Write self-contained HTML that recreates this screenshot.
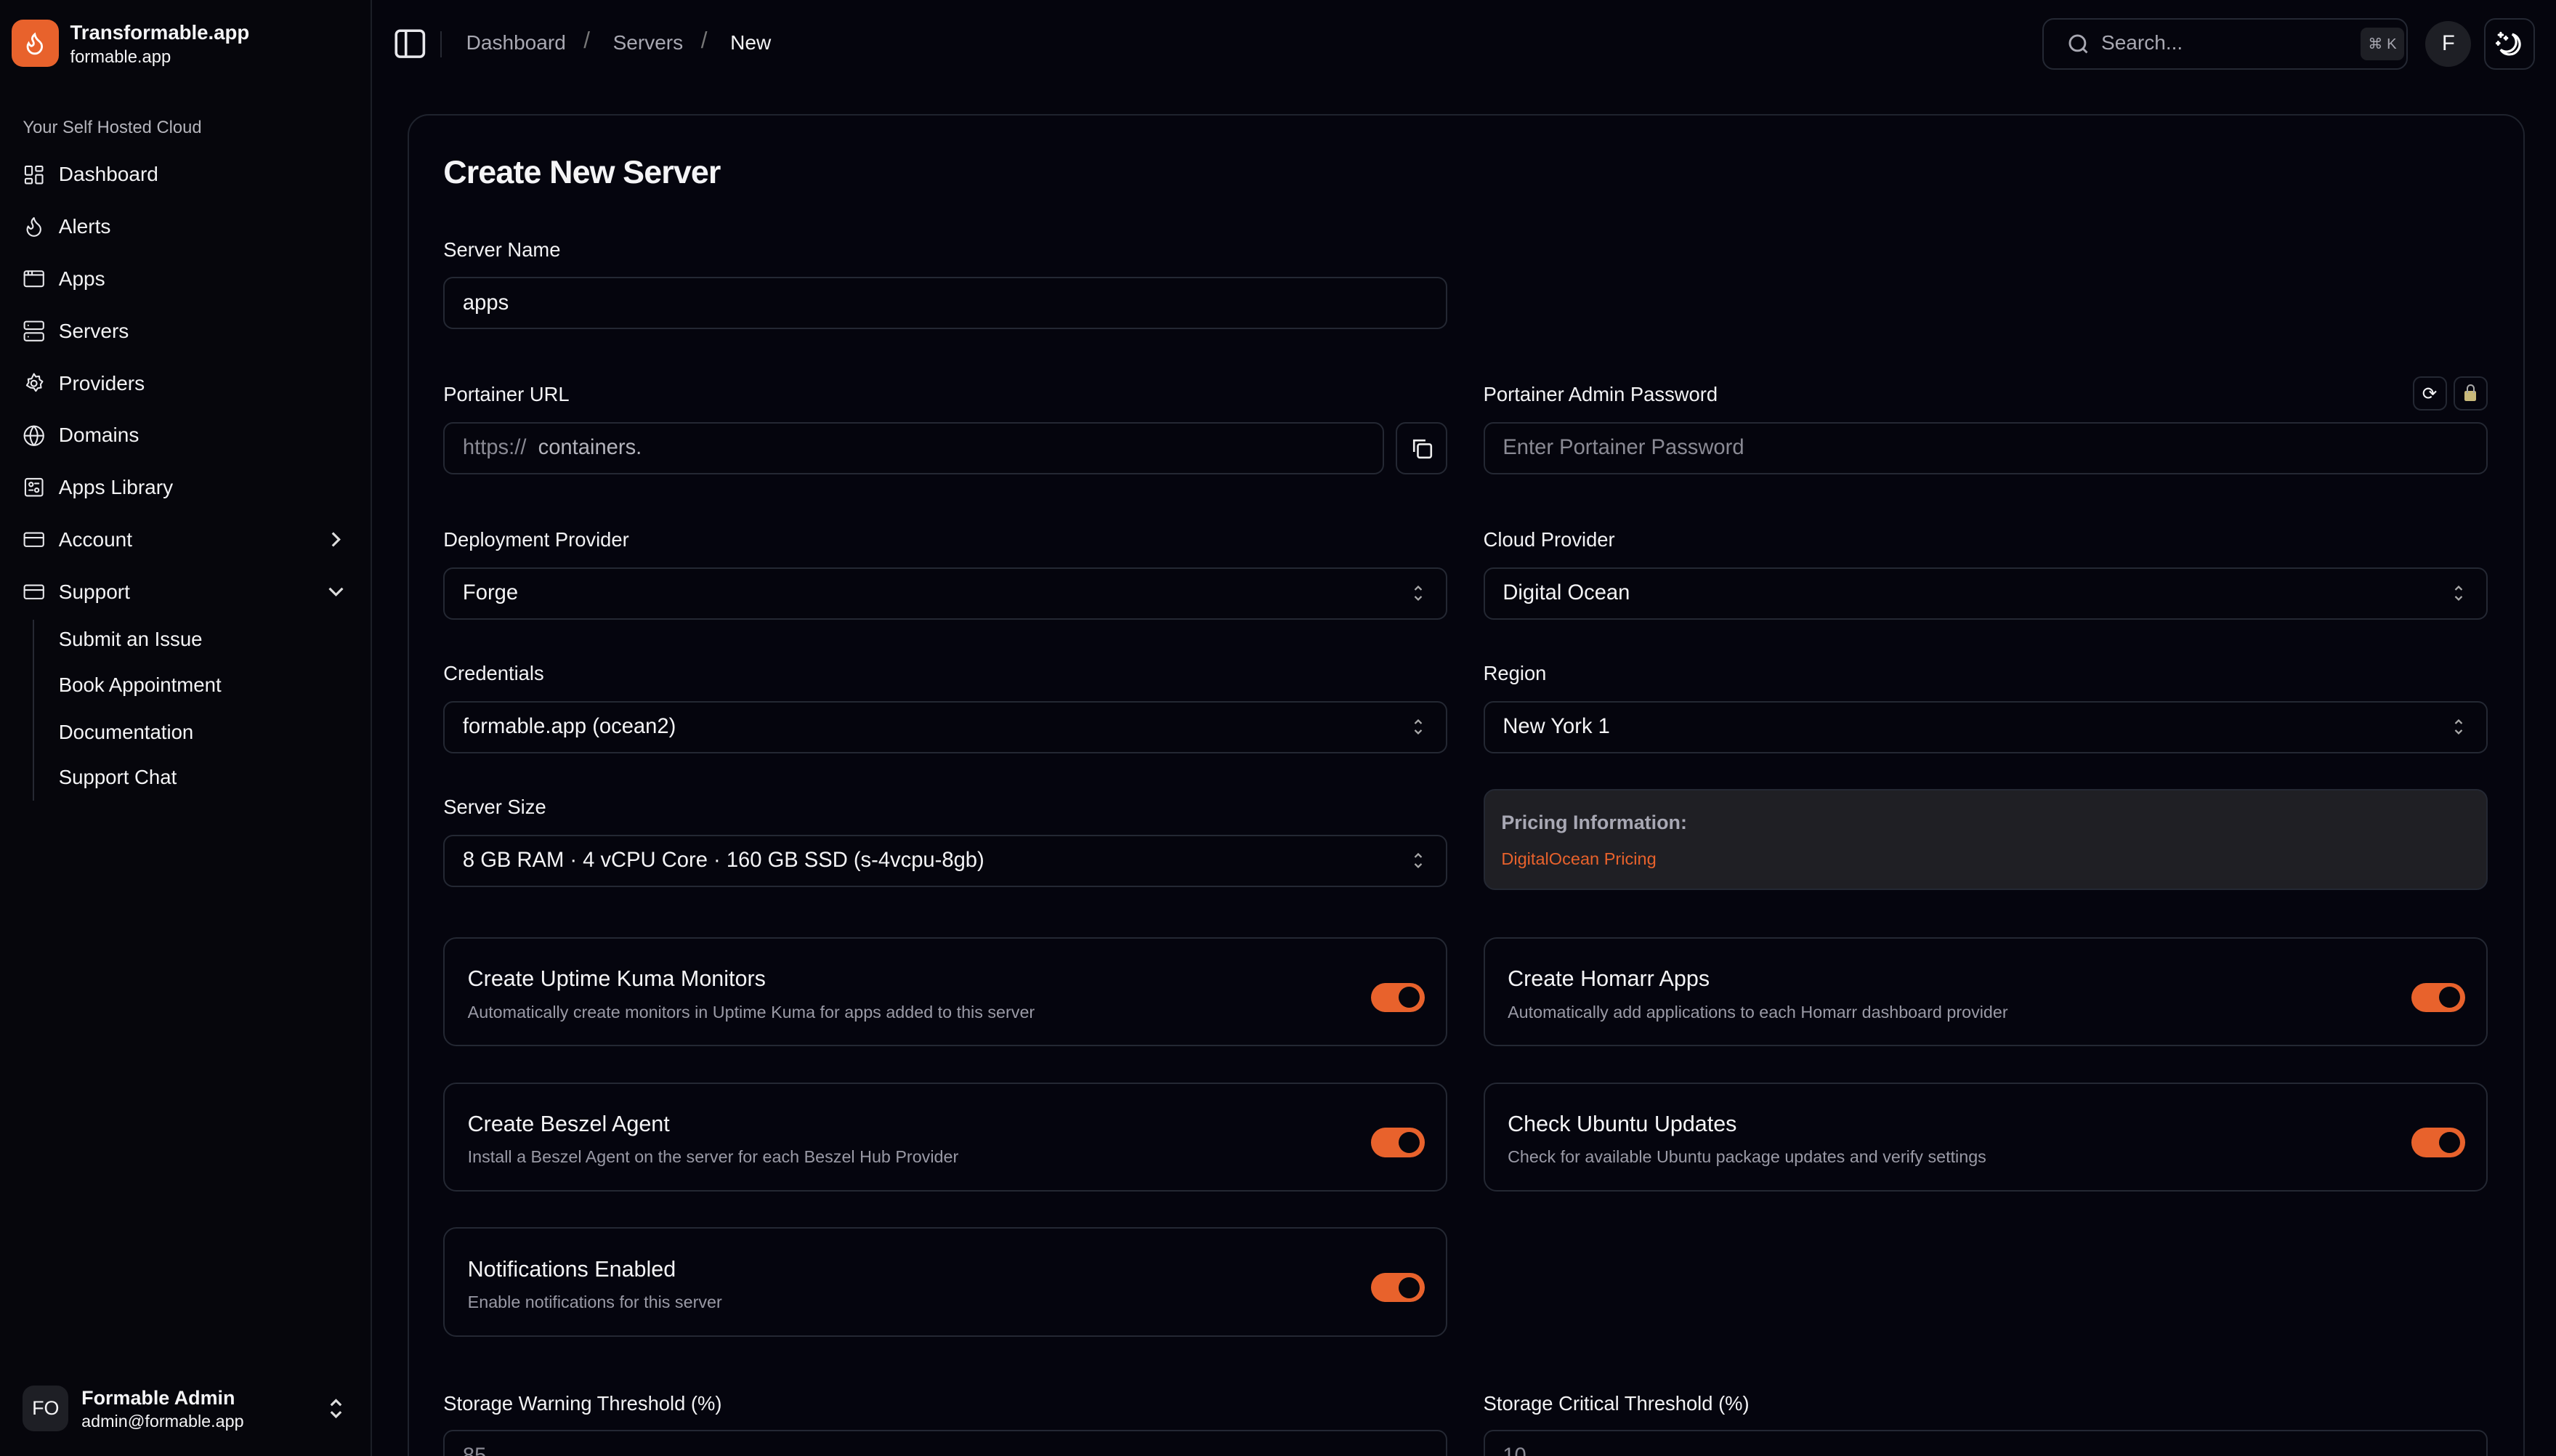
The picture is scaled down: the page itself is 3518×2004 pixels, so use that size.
<!DOCTYPE html>
<html><head><meta charset="utf-8"><style>
*{box-sizing:border-box;margin:0;padding:0}
html,body{width:3518px;height:2004px;overflow:hidden;background:#05050d}
#root{zoom:2.2436;width:1568px;height:893px;position:relative;font-family:"Liberation Sans",sans-serif;color:#f4f4f6;overflow:hidden;background:#05050d}
.a{position:absolute;white-space:nowrap}
.side{position:absolute;left:0;top:0;width:228px;height:893px;background:#06060c;border-right:1px solid #1c1f27}
.nav{position:absolute;left:14px;font-size:12.5px;display:flex;align-items:center;gap:8px;color:#f2f2f4}
.nav svg{width:14px;height:14px;stroke:#e8e8ec;fill:none;stroke-width:1.6;stroke-linecap:round;stroke-linejoin:round}
.sub{position:absolute;left:36px;font-size:12.3px}
.lbl{position:absolute;font-size:12.2px;color:#f2f2f4}
.inp{position:absolute;height:32px;border:1px solid #242833;border-radius:6px;background:#05050d;font-size:13px;padding-left:11px;display:flex;align-items:center}
.chev{position:absolute;right:13px;top:9px;width:8px;height:12px}
.tc{position:absolute;height:67px;border:1px solid #242833;border-radius:8px}
.tc .t{position:absolute;left:14px;top:17px;font-size:13.6px}
.tc .d{position:absolute;left:14px;top:39px;font-size:10.4px;color:#9a9aa6}
.tg{position:absolute;right:13px;top:27px;width:33px;height:18px;border-radius:9px;background:#e8622c}
.tg::after{content:"";position:absolute;right:3px;top:2.5px;width:13px;height:13px;border-radius:50%;background:#06060c}
</style></head><body><div id="root">
<div class="side">
 <div class="a" style="left:7px;top:12px;width:29px;height:29px;border-radius:7px;background:#e8622c"></div>
 <svg class="a" style="left:14px;top:19px" width="15" height="15" viewBox="0 0 24 24" fill="none" stroke="#fff" stroke-width="2" stroke-linecap="round"><path d="M8.5 14.5A2.5 2.5 0 0 0 11 12c0-1.4-.5-2-1-3-1.1-2.1-.2-4 2-6 .5 2.5 2 4.9 4 6.5 2 1.6 3 3.5 3 5.5a7 7 0 1 1-14 0c0-1.200.4-2.300 1-3.200.4 1 1.200 1.900 2.500 2.700z"/></svg>
 <div class="a" style="left:43px;top:13px;font-size:12.3px;font-weight:bold">Transformable.app</div>
 <div class="a" style="left:43px;top:29px;font-size:10.6px">formable.app</div>
 <div class="a" style="left:14px;top:72px;font-size:10.6px;color:#b4b4bc">Your Self Hosted Cloud</div>
 <div class="nav" style="top:100px"><svg viewBox="0 0 24 24"><rect x="3" y="3" width="7" height="9" rx="1"/><rect x="14" y="3" width="7" height="5" rx="1"/><rect x="14" y="12" width="7" height="9" rx="1"/><rect x="3" y="16" width="7" height="5" rx="1"/></svg>Dashboard</div>
 <div class="nav" style="top:132px"><svg viewBox="0 0 24 24"><path d="M8.5 14.5A2.5 2.5 0 0 0 11 12c0-1.4-.5-2-1-3-1.1-2.1-.2-4 2-6 .5 2.5 2 4.9 4 6.5 2 1.6 3 3.5 3 5.5a7 7 0 1 1-14 0c0-1.2.4-2.3 1-3.2.4 1 1.2 1.9 2.5 2.7z"/></svg>Alerts</div>
 <div class="nav" style="top:164px"><svg viewBox="0 0 24 24"><rect x="2" y="4" width="20" height="16" rx="2"/><path d="M2 8h20M6 4v4M10 4v4"/></svg>Apps</div>
 <div class="nav" style="top:196px"><svg viewBox="0 0 24 24"><rect x="2" y="2" width="20" height="8" rx="2"/><rect x="2" y="14" width="20" height="8" rx="2"/><path d="M6 6h.01M6 18h.01"/></svg>Servers</div>
 <div class="nav" style="top:228px"><svg viewBox="0 0 24 24"><circle cx="12" cy="12" r="3"/><path d="M12 2l2 3 3.5-.5.5 3.5 3 2-2 3 .5 3.5-3.5.5-2 3-2-3-3.5-.5L7.5 16 4.5 14l2-3-.5-3.5L9.5 7z"/></svg>Providers</div>
 <div class="nav" style="top:260px"><svg viewBox="0 0 24 24"><circle cx="12" cy="12" r="10"/><path d="M2 12h20M12 2a15 15 0 0 1 0 20M12 2a15 15 0 0 0 0 20"/></svg>Domains</div>
 <div class="nav" style="top:292px"><svg viewBox="0 0 24 24"><rect x="3" y="3" width="18" height="18" rx="2"/><circle cx="9" cy="9" r="2"/><circle cx="15" cy="15" r="2"/><path d="M7 15h4M13 8h4"/></svg>Apps Library</div>
 <div class="nav" style="top:324px"><svg viewBox="0 0 24 24"><rect x="2" y="5" width="20" height="14" rx="2"/><path d="M2 10h20"/></svg>Account</div>
 <svg class="a" style="left:201px;top:325px" width="10" height="12" viewBox="0 0 10 12" fill="none" stroke="#ddd" stroke-width="1.4"><path d="M3 2l4 4-4 4"/></svg>
 <div class="nav" style="top:356px"><svg viewBox="0 0 24 24"><rect x="2" y="5" width="20" height="14" rx="2"/><path d="M2 10h20"/></svg>Support</div>
 <svg class="a" style="left:200px;top:358px" width="12" height="10" viewBox="0 0 12 10" fill="none" stroke="#ddd" stroke-width="1.4"><path d="M2 3l4 4 4-4"/></svg>
 <div class="a" style="left:20px;top:380px;width:1px;height:111px;background:#262932"></div>
 <div class="sub" style="top:385px">Submit an Issue</div>
 <div class="sub" style="top:413px">Book Appointment</div>
 <div class="sub" style="top:442px">Documentation</div>
 <div class="sub" style="top:470px">Support Chat</div>
 <div class="a" style="left:14px;top:850px;width:28px;height:28px;border-radius:7px;background:#1e1f25;font-size:12px;display:flex;align-items:center;justify-content:center">FO</div>
 <div class="a" style="left:50px;top:851px;font-size:12px;font-weight:bold">Formable Admin</div>
 <div class="a" style="left:50px;top:866px;font-size:10.4px">admin@formable.app</div>
 <svg class="a" style="left:200px;top:857px" width="12" height="14" viewBox="0 0 12 14" fill="none" stroke="#ddd" stroke-width="1.4"><path d="M3 5l3-3 3 3M3 9l3 3 3-3"/></svg>
</div>
<svg class="a" style="left:242px;top:18px" width="19" height="18" viewBox="0 0 19 18" fill="none" stroke="#e8e8ec" stroke-width="1.6"><rect x="1" y="1" width="17" height="16" rx="2.5"/><path d="M7 1v16"/></svg>
<div class="a" style="left:270px;top:19px;width:1px;height:16px;background:#262932"></div>
<div class="a" style="left:286px;top:19px;font-size:12.5px;color:#a8a8b2">Dashboard</div>
<div class="a" style="left:430px;top:17px;font-size:14px;color:#777">/</div>
<div class="a" style="left:358px;top:17px;font-size:14px;color:#777">/</div>
<div class="a" style="left:376px;top:19px;font-size:12.5px;color:#a8a8b2">Servers</div>
<div class="a" style="left:448px;top:19px;font-size:12.5px">New</div>
<div class="a" style="left:1253px;top:11px;width:224px;height:32px;border:1px solid #242833;border-radius:7px"></div>
<svg class="a" style="left:1268px;top:20px" width="14" height="14" viewBox="0 0 24 24" fill="none" stroke="#a8a8b2" stroke-width="2.2"><circle cx="11" cy="11" r="8"/><path d="M21 21l-4.3-4.3"/></svg>
<div class="a" style="left:1289px;top:19px;font-size:12.5px;color:#a8a8b2">Search...</div>
<div class="a" style="left:1448px;top:17px;width:27px;height:20px;border-radius:4px;background:#1e1f25;font-size:9px;color:#a8a8b2;display:flex;align-items:center;justify-content:center">⌘ K</div>
<div class="a" style="left:1488px;top:13px;width:28px;height:28px;border-radius:50%;background:#1e1f25;font-size:13px;display:flex;align-items:center;justify-content:center">F</div>
<div class="a" style="left:1524px;top:11px;width:31px;height:32px;border:1px solid #242833;border-radius:7px"></div>
<svg class="a" style="left:1530px;top:18px" width="19" height="19" viewBox="0 0 24 24" fill="none" stroke="#fff" stroke-width="1.8" stroke-linecap="round"><path d="M14 4a8 8 0 1 1-9 12 7 7 0 0 0 9-12z"/><path d="M5 3v3M3.5 4.5h3M9 6v2M8 7h2M3 10v2M2 11h2"/></svg>
<div class="a" style="left:250px;top:70px;width:1299px;height:840px;border:1px solid #1f232d;border-radius:13px;background:#05050e"></div>
<div class="a" style="left:272px;top:94px;font-size:20px;font-weight:bold;letter-spacing:-0.4px">Create New Server</div>
<div class="lbl" style="left:272px;top:146px">Server Name</div>
<div class="inp" style="left:272px;top:170px;width:616px">apps</div>
<div class="lbl" style="left:272px;top:235px">Portainer URL</div>
<div class="inp" style="left:272px;top:259px;width:577px"><span style="color:#8a8a94">https://</span>&nbsp;&nbsp;<span style="color:#b4b4bc">containers.</span></div>
<div class="a" style="left:856px;top:259px;width:32px;height:32px;border:1px solid #242833;border-radius:6px"></div>
<svg class="a" style="left:865px;top:268px" width="14" height="14" viewBox="0 0 24 24" fill="none" stroke="#eee" stroke-width="2"><rect x="8" y="8" width="14" height="14" rx="2"/><path d="M4 16V4h12"/></svg>
<div class="lbl" style="left:910px;top:235px">Portainer Admin Password</div>
<div class="a" style="left:1480px;top:231px;width:21px;height:21px;border:1px solid #242833;border-radius:5px;font-size:11px;display:flex;align-items:center;justify-content:center">⟳</div>
<div class="a" style="left:1505px;top:231px;width:21px;height:21px;border:1px solid #242833;border-radius:5px;display:flex;align-items:center;justify-content:center"><div style="width:7px;height:6px;background:#c9b97a;border-radius:1px;margin-top:3px;position:relative"><div style="position:absolute;left:1px;top:-4px;width:5px;height:5px;border:1px solid #aaa;border-bottom:none;border-radius:3px 3px 0 0"></div></div></div>
<div class="inp" style="left:910px;top:259px;width:616px;color:#8a8a94">Enter Portainer Password</div>
<div class="lbl" style="left:272px;top:324px">Deployment Provider</div>
<div class="inp" style="left:272px;top:348px;width:616px">Forge<svg class="chev" viewBox="0 0 8 12" fill="none" stroke="#aaa" stroke-width="1"><path d="M2 4l2-2 2 2M2 8l2 2 2-2"/></svg></div>
<div class="lbl" style="left:910px;top:324px">Cloud Provider</div>
<div class="inp" style="left:910px;top:348px;width:616px">Digital Ocean<svg class="chev" viewBox="0 0 8 12" fill="none" stroke="#aaa" stroke-width="1"><path d="M2 4l2-2 2 2M2 8l2 2 2-2"/></svg></div>
<div class="lbl" style="left:272px;top:406px">Credentials</div>
<div class="inp" style="left:272px;top:430px;width:616px">formable.app (ocean2)<svg class="chev" viewBox="0 0 8 12" fill="none" stroke="#aaa" stroke-width="1"><path d="M2 4l2-2 2 2M2 8l2 2 2-2"/></svg></div>
<div class="lbl" style="left:910px;top:406px">Region</div>
<div class="inp" style="left:910px;top:430px;width:616px">New York 1<svg class="chev" viewBox="0 0 8 12" fill="none" stroke="#aaa" stroke-width="1"><path d="M2 4l2-2 2 2M2 8l2 2 2-2"/></svg></div>
<div class="lbl" style="left:272px;top:488px">Server Size</div>
<div class="inp" style="left:272px;top:512px;width:616px">8 GB RAM · 4 vCPU Core · 160 GB SSD (s-4vcpu-8gb)<svg class="chev" viewBox="0 0 8 12" fill="none" stroke="#aaa" stroke-width="1"><path d="M2 4l2-2 2 2M2 8l2 2 2-2"/></svg></div>
<div class="a" style="left:910px;top:484px;width:616px;height:62px;border:1px solid #242833;border-radius:7px;background:#1f1f24"></div>
<div class="a" style="left:921px;top:498px;font-size:12px;font-weight:bold;color:#a8a8b4">Pricing Information:</div>
<div class="a" style="left:921px;top:521px;font-size:10.5px;color:#e8622c">DigitalOcean Pricing</div>
<div class="tc" style="left:272px;top:575px;width:616px"><div class="t">Create Uptime Kuma Monitors</div><div class="d">Automatically create monitors in Uptime Kuma for apps added to this server</div><div class="tg"></div></div>
<div class="tc" style="left:910px;top:575px;width:616px"><div class="t">Create Homarr Apps</div><div class="d">Automatically add applications to each Homarr dashboard provider</div><div class="tg"></div></div>
<div class="tc" style="left:272px;top:664px;width:616px"><div class="t">Create Beszel Agent</div><div class="d">Install a Beszel Agent on the server for each Beszel Hub Provider</div><div class="tg"></div></div>
<div class="tc" style="left:910px;top:664px;width:616px"><div class="t">Check Ubuntu Updates</div><div class="d">Check for available Ubuntu package updates and verify settings</div><div class="tg"></div></div>
<div class="tc" style="left:272px;top:753px;width:616px"><div class="t">Notifications Enabled</div><div class="d">Enable notifications for this server</div><div class="tg"></div></div>
<div class="lbl" style="left:272px;top:854px">Storage Warning Threshold (%)</div>
<div class="inp" style="left:272px;top:877px;width:616px;align-items:flex-start;padding-top:8px;color:#8a8a94">85</div>
<div class="lbl" style="left:910px;top:854px">Storage Critical Threshold (%)</div>
<div class="inp" style="left:910px;top:877px;width:616px;align-items:flex-start;padding-top:8px;color:#8a8a94">10</div>
</div></body></html>
